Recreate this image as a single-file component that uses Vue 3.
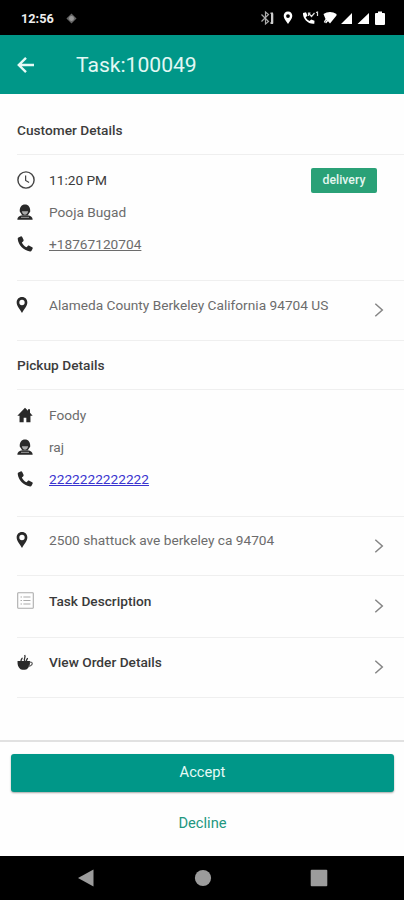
<script setup>
import { h } from 'vue'

const shapes = {
  clock: [
    ['circle', { cx: 12, cy: 12, r: 10.8, fill: 'none', stroke: '#444', 'stroke-width': 1.9 }],
    ['path', { d: 'M11.500 6v6.600l4.600 2.800', fill: 'none', stroke: '#444', 'stroke-width': 1.6 }],
  ],
  person: [
    ['path', { d: 'M4.200 11.500C3.600 4.800 7 .8 12 .8s8.400 4 7.800 10.700l-1.500 2C17.300 16.500 15 17.700 12 17.700s-5.300-1.200-6.300-4.200z' }],
    ['path', { d: 'M7.300 11h9.400c-.5 3.500-2.300 5-4.700 5s-4.200-1.500-4.700-5z', fill: '#aaa' }],
    ['path', { d: 'M.5 23.500c0-4 2.700-5.500 7.500-6.500 2.500 1.200 5.500 1.200 8 0 4.800 1 7.500 2.500 7.500 6.500z' }],
    ['path', { d: 'M6 20h12', stroke: '#bbb', 'stroke-width': 1.2 }],
  ],
  phone: [
    ['path', { d: 'M2.200 2.400 5.500.6c1-.4 1.800 0 2.300.9l2 4.200c.4 1 .1 1.800-.7 2.400L7.300 9.700c1.400 3.300 3.700 5.700 7 7.100l1.800-1.900c.7-.7 1.500-.8 2.400-.4l4.200 2.200c.9.500 1.200 1.200.8 2.200l-1.700 3.200c-.5.900-1.300 1.200-2.300 1C9 21.300 2.200 13.800 1.100 4.600c-.1-1 .2-1.700 1.100-2.200z' }],
  ],
  pin: [
    ['path', { 'fill-rule': 'evenodd', d: 'M12 0C7 0 4 3.700 4 8.200c0 5 4.500 9.300 8 15.800 3.500-6.500 8-10.800 8-15.800C20 3.700 17 0 12 0zm0 4.300a4 4 0 1 1 0 8 4 4 0 0 1 0-8z' }],
  ],
  home: [
    ['path', { d: 'M12 1 .5 13h3.300v10H10v-7h4v7h6.200V13h3.300l-4-4.200V3.500h-3v2.200z' }],
  ],
  list: [
    ['rect', { x: 1, y: 1, width: 22, height: 22, rx: 1, fill: 'none', stroke: '#aaa', 'stroke-width': 1.5 }],
    ['path', { d: 'M5 7h2m2 0h10M5 12h2m2 0h10M5 17h2m2 0h10', stroke: '#aaa', 'stroke-width': 1.5 }],
  ],
  cup: [
    ['path', { d: 'M.8 10.500h18.700c.3 6-1 9-4 11.500-1 1.300-2.500 1.500-5.500 1.500s-4.500-.2-5.500-1.500C1.800 19.500.5 16.500.8 10.500z' }],
    ['path', { d: 'M19 12.500c5.500-1.500 5.500 4.800-2 6', fill: 'none', stroke: '#666', 'stroke-width': 1.8 }],
    ['path', { d: 'M6.500 11C4.500 8 8.500 8 7.500 5.500m4.500 5.500C8.500 7 14 6 11.500 1.500m3 9.500c-1.500-3 2-3 1-5', fill: 'none', stroke: '#333', 'stroke-width': 2 }],
  ],
}

const Icon = (props) =>
  h('svg', { viewBox: '0 0 24 24', fill: '#292929' }, shapes[props.name].map(([tag, attrs]) => h(tag, attrs)))
Icon.props = ['name']

const customer = [
  { icon: 'clock', text: '11:20 PM', kind: 'hour', tag: 'delivery' },
  { icon: 'person', text: 'Pooja Bugad', kind: 'name' },
  { icon: 'phone', text: '+18767120704', kind: 'number' },
]
const pickup = [
  { icon: 'home', text: 'Foody', kind: 'name' },
  { icon: 'person', text: 'raj', kind: 'name' },
  { icon: 'phone', text: '2222222222222', kind: 'number link' },
]
const actions = [
  { icon: 'pin', text: '2500 shattuck ave berkeley ca 94704', kind: 'address' },
  { icon: 'list', text: 'Task Description', kind: 'action' },
  { icon: 'cup', text: 'View Order Details', kind: 'action' },
]
</script>

<template>
  <div class="screen">
    <div class="status">
      <span class="time">12:56</span>
      <svg class="dot" viewBox="0 0 12 12"><path d="M6 .5 11.500 6 6 11.500.5 6z" fill="#666" /><circle cx="6" cy="6" r="2.700" fill="#999" /></svg>
      <svg class="sys" viewBox="0 0 126 16">
        <path d="m1.500 4.500 7 7-3 2.500V2l3 2.500-7 7" fill="none" stroke="#aaa" stroke-width="1.200" />
        <path d="M11 3.500h2.300v10H11zM10.500 2.500h2.500v1.500h-2.500zM10.500 12h2.500v2h-2.500z" fill="#ccc" />
        <path fill="#fff" fill-rule="evenodd" d="M28 1.500c-2.700 0-4.300 2-4.300 4.500 0 3 2.700 5 4.300 8 1.600-3 4.300-5 4.300-8 0-2.500-1.600-4.500-4.300-4.500zm0 2.700a1.900 1.900 0 1 1 0 3.800 1.900 1.900 0 0 1 0-3.800z" />
        <path fill="#fff" d="m43 3 3-.7 1.500 3.500-1.800 1.500c.8 1.800 2 3 3.800 3.800l1.700-1.600 3.300 1.200-.2 3C48.500 14.500 42.500 9 43 3z" />
        <path d="m48.500 3 3 3.500 3-3.500m-6 3V3h2M56 2.500l1.500-.5v4" fill="none" stroke="#ddd" stroke-width="1.200" />
        <path fill="#fff" d="M63.500 4c4-2.700 9-2.700 13 0v1.500l-6.500 8-2-2.300-2 2.300c-.5-1-1.200-1.500-2.200-1.700L65.500 9z" />
        <path d="m64 13 2.700-3" stroke="#888" />
        <path fill="#fff" d="M92 3v11H81zM109 3v11H97.500zM116 3h2V1.500h4V3h2q1 0 1 1v10q0 1-1 1h-8q-1 0-1-1V4q0-1 1-1z" />
      </svg>
    </div>

    <header class="bar">
      <svg class="back" viewBox="0 0 18 18"><path d="M17 9H2m7-7.200L1.800 9 9 16.200" fill="none" stroke="#e6faf6" stroke-width="2.400" /></svg>
      <h1>Task:100049</h1>
    </header>

    <main class="content">
      <h2 class="heading first">Customer Details</h2>
      <section class="group">
        <div v-for="row in customer" :key="row.text" class="row">
          <Icon class="icon" :class="row.icon" :name="row.icon" />
          <span :class="row.kind">{{ row.text }}</span>
          <span v-if="row.tag" class="tag">{{ row.tag }}</span>
        </div>
      </section>
      <div class="item customer-item">
        <Icon class="icon pin" name="pin" />
        <span class="address">Alameda County Berkeley California 94704 US</span>
        <svg class="chevron" viewBox="0 0 10 14"><path d="m1.300.8 7 6.200-7 6.200" /></svg>
      </div>
      <h2 class="heading second">Pickup Details</h2>
      <section class="group pickup">
        <div v-for="row in pickup" :key="row.text" class="row">
          <Icon class="icon" :class="row.icon" :name="row.icon" />
          <span :class="row.kind">{{ row.text }}</span>
        </div>
      </section>
      <div v-for="row in actions" :key="row.text" class="item" :class="row.icon + '-item'">
        <Icon class="icon" :class="row.icon" :name="row.icon" />
        <span :class="row.kind">{{ row.text }}</span>
        <svg class="chevron" viewBox="0 0 10 14"><path d="m1.300.8 7 6.200-7 6.200" /></svg>
      </div>
    </main>

    <footer class="footer">
      <button class="accept">Accept</button>
      <button class="decline">Decline</button>
    </footer>

    <nav class="nav">
      <svg viewBox="0 0 18 18"><path d="M1 9 16.500.5v17z" /></svg>
      <svg viewBox="0 0 18 18"><circle cx="9" cy="9" r="8.100" /></svg>
      <svg viewBox="0 0 18 18"><rect x=".7" y=".7" width="16.600" height="16.600" rx="1" /></svg>
    </nav>
  </div>
</template>

<style>
body {
  margin: 0;
}
</style>

<style scoped>
.screen {
  width: 404px;
  height: 900px;
  display: flex;
  flex-direction: column;
  overflow: hidden;
  background: #fefefe;
  font-family: Roboto, sans-serif;
  font-size: 13.7px;
  color: #6c6c6c;
}
.screen * {
  box-sizing: border-box;
}
svg {
  display: block;
  flex: none;
}
.status {
  height: 35px;
  flex: none;
  display: flex;
  align-items: center;
  padding: 1px 18px 0 21px;
  background: #000;
}
.time {
  width: 45px;
  color: #eee;
  font-size: 12.7px;
  font-weight: 700;
}
.dot {
  width: 11px;
  height: 11px;
}
.sys {
  width: 126px;
  height: 16px;
  margin-left: auto;
}
.bar {
  height: 59px;
  flex: none;
  display: flex;
  align-items: center;
  padding-left: 17px;
  background: #009788;
}
.back {
  width: 18px;
  height: 18px;
  margin-top: 1px;
}
h1 {
  margin: 0 0 0 41px;
  color: #e2f8f4;
  font-size: 21.1px;
  font-weight: 400;
  line-height: 24px;
}
.content {
  height: 646px;
  flex: none;
  padding-left: 17px;
}
.heading {
  margin: 0;
  display: flex;
  align-items: center;
  border-bottom: 1px solid #efefef;
  color: #3c3c3c;
  font-size: 13.7px;
  font-weight: 500;
}
.first {
  height: 61px;
  padding-top: 12px;
}
.second {
  height: 49px;
}
.group {
  height: 126px;
  padding-top: 9px;
  border-bottom: 1px solid #efefef;
}
.pickup {
  height: 127px;
}
.row {
  height: 32px;
  display: flex;
  align-items: center;
}
.icon {
  width: 16px;
  height: 16px;
  margin-right: 16px;
}
.clock {
  width: 18px;
  height: 18px;
  margin-right: 14px;
}
.pin {
  margin-left: -3px;
  margin-right: 19px;
}
.list {
  width: 17px;
  height: 17px;
  margin-right: 15px;
}
.hour {
  color: #3c3c3c;
}
.number {
  text-decoration: underline;
}
.link {
  color: #3933cf;
}
.tag {
  width: 66px;
  height: 25px;
  margin-left: auto;
  margin-right: 27px;
  border-radius: 2px;
  background: #2aa177;
  color: #e5f7f0;
  font-size: 12.3px;
  font-weight: 500;
  line-height: 24px;
  text-align: center;
}
.item {
  height: 60px;
  display: flex;
  align-items: center;
  padding-bottom: 12px;
  border-bottom: 1px solid #efefef;
}
.pin-item {
  height: 59px;
}
.customer-item {
  height: 60px;
}
.list-item {
  height: 62px;
}
.action {
  color: #3a3a3a;
  font-weight: 500;
}
.chevron {
  width: 10px;
  height: 14px;
  margin-left: auto;
  margin-right: 20px;
  margin-top: 11px;
}
.chevron path {
  fill: none;
  stroke: #858585;
  stroke-width: 1.5;
}
.footer {
  height: 116px;
  flex: none;
  display: flex;
  flex-direction: column;
  align-items: center;
  padding-top: 12px;
  border-top: 2px solid #e1e1e1;
}
button {
  border: 0;
  padding: 0;
  background: none;
  font-family: Roboto, sans-serif;
}
.accept {
  width: 383px;
  height: 38px;
  margin-left: 1px;
  padding-bottom: 2px;
  border-radius: 3px;
  background: #009788;
  box-shadow: 0 1px 2px rgb(0 0 0 / 35%);
  color: #e5faf6;
  font-size: 14.7px;
}
.decline {
  height: 30px;
  margin-top: 16px;
  margin-left: 1px;
  color: #229780;
  font-size: 14.7px;
}
.nav {
  flex: 1;
  display: flex;
  justify-content: space-between;
  align-items: center;
  padding: 0 76px 0 77px;
  background: #000;
}
.nav svg {
  width: 18px;
  height: 18px;
  fill: #9c9c9c;
}
</style>
